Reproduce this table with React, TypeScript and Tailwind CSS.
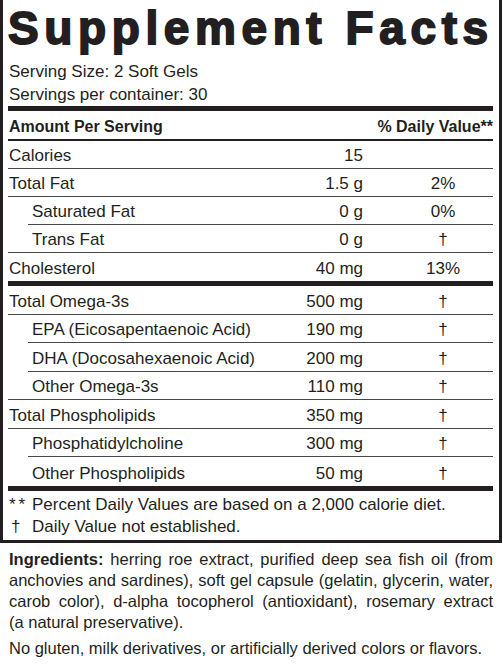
const ink = 'text-[#231f20]'

type Row = {
  label: string
  amount: string
  dv?: string
  indent?: boolean
  line: 'full' | 'indent' | 'none'
}

const topRows: Row[] = [
  { label: 'Calories', amount: '15', line: 'full' },
  { label: 'Total Fat', amount: '1.5 g', dv: '2%', line: 'full' },
  { label: 'Saturated Fat', amount: '0 g', dv: '0%', indent: true, line: 'indent' },
  { label: 'Trans Fat', amount: '0 g', dv: '†', indent: true, line: 'full' },
  { label: 'Cholesterol', amount: '40 mg', dv: '13%', line: 'none' },
]

const lowerRows: Row[] = [
  { label: 'Total Omega-3s', amount: '500 mg', dv: '†', line: 'full' },
  { label: 'EPA (Eicosapentaenoic Acid)', amount: '190 mg', dv: '†', indent: true, line: 'indent' },
  { label: 'DHA (Docosahexaenoic Acid)', amount: '200 mg', dv: '†', indent: true, line: 'indent' },
  { label: 'Other Omega-3s', amount: '110 mg', dv: '†', indent: true, line: 'full' },
  { label: 'Total Phospholipids', amount: '350 mg', dv: '†', line: 'full' },
  { label: 'Phosphatidylcholine', amount: '300 mg', dv: '†', indent: true, line: 'indent' },
  { label: 'Other Phospholipids', amount: '50 mg', dv: '†', indent: true, line: 'none' },
]

function FactRow({ row, tall }: { row: Row; tall?: boolean }) {
  const border =
    row.line === 'none' ? '' : 'border-b border-[#4a4647]'
  const shift = row.line === 'indent' ? 'ml-[20px]' : ''
  const pad = row.indent ? (row.line === 'indent' ? 'pl-[4px]' : 'pl-[24px]') : 'pl-[1px]'
  return (
    <div
      className={`flex items-end pb-[2px] ${tall ? 'h-[28.5px]' : 'h-[28px]'} ${border} ${shift}`}
    >
      <span className={`flex-1 leading-[20px] ${pad}`}>{row.label}</span>
      <span className="w-[100px] text-right leading-[20px]">{row.amount}</span>
      <span className="w-[130px] pl-[30px] text-center leading-[20px]">{row.dv}</span>
    </div>
  )
}

const ingredientLines = [
  'herring roe extract, purified deep sea fish oil (from',
  'anchovies and sardines), soft gel capsule (gelatin, glycerin, water,',
  'carob color), d-alpha tocopherol (antioxidant), rosemary extract',
]

export default function App() {
  return (
    <div className={`w-[503px] h-[666px] bg-white ${ink} font-['Liberation_Sans',Arial,sans-serif]`}>
      <div className="w-[502px] border-x-[3px] border-b-[3px] border-[#231f20] pl-[5px] pr-[6px]">
        <div className="pt-[5px] h-[50px]">
          <h1 className="text-[46px] leading-[46px] font-bold tracking-[5.6px] whitespace-nowrap [-webkit-text-stroke:1.8px_#231f20]">
            Supplement Facts
          </h1>
        </div>
        <div className="mt-[10px] text-[17px] leading-[23px] pl-[1px]">
          <div>Serving Size: 2 Soft Gels</div>
          <div>Servings per container: 30</div>
        </div>
        <div className="h-[5px] bg-[#231f20]" />
        <div className="flex items-start h-[30px] pt-[6px] border-b-2 border-[#231f20] text-[16px] font-bold leading-[20px]">
          <span className="flex-1 pl-[1px]">Amount Per Serving</span>
          <span>% Daily Value**</span>
        </div>
        <div className="text-[17px]">
          {topRows.map((r) => (
            <FactRow key={r.label} row={r} />
          ))}
        </div>
        <div className="h-[5px] bg-[#231f20]" />
        <div className="text-[17px]">
          {lowerRows.map((r) => (
            <FactRow key={r.label} row={r} tall />
          ))}
        </div>
        <div className="h-[5px] bg-[#231f20]" />
        <div className="pt-[3px] pb-[2px] text-[17px] leading-[22px]">
          <div className="flex">
            <span className="w-[24px] pl-[1px] tracking-[3px]">**</span>
            <span>Percent Daily Values are based on a 2,000 calorie diet.</span>
          </div>
          <div className="flex">
            <span className="w-[24px] pl-[3px]">†</span>
            <span>Daily Value not established.</span>
          </div>
        </div>
      </div>

      {/* ingredients */}
      <div className="mt-[6px] pl-[9px] pr-[10px] text-[16.5px] leading-[21px]">
        {ingredientLines.map((line, i) => (
          <div key={i} className="text-justify [text-align-last:justify]">
            {i === 0 && <span className="font-bold">Ingredients: </span>}
            {line}
          </div>
        ))}
        <div>(a natural preservative).</div>
        <div className="mt-[5px]">
          No gluten, milk derivatives, or artificially derived colors or flavors.
        </div>
      </div>
    </div>
  )
}
